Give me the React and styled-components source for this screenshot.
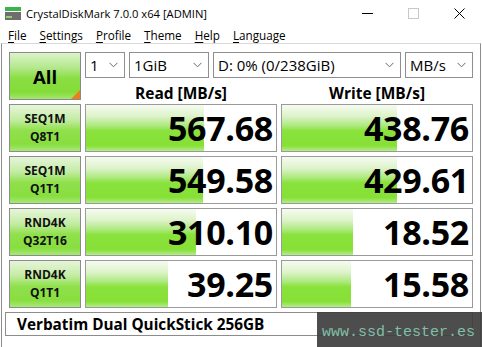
import React from "react";
import styled, { createGlobalStyle } from "styled-components";

const Global = createGlobalStyle`
  html, body { margin: 0; padding: 0; background: #fff; }
  body { font-family: "Open Sans", "Noto Sans", sans-serif; color: #000; }
`;

const Window = styled.div`
  position: relative;
  width: 482px;
  height: 347px;
  overflow: hidden;
  background: #fff;
  display: flex;
  flex-direction: column;
`;

const TitleBar = styled.div`
  height: 27px;
  display: flex;
  align-items: center;
  padding-left: 5px;
  font-size: 11.2px;
  color: #000;
`;

const TitleText = styled.span`
  margin-left: 5px;
  flex: 1;
  white-space: nowrap;
`;

const Ctrl = styled.div`
  width: 46px;
  height: 27px;
  display: flex;
  align-items: center;
  justify-content: center;
`;

const MenuBar = styled.div`
  height: 18px;
  display: flex;
  align-items: center;
  padding-left: 8px;
  font-size: 11.7px;
`;

const MenuItem = styled.span`
  margin-right: ${(p) => p.$mr}px;
  white-space: nowrap;
  & u { text-decoration: underline; text-underline-offset: 2px; }
`;

const Client = styled.div`
  flex: 1;
  margin-left: 1px;
  width: 480px;
  box-sizing: border-box;
  border: 1px solid #8d8d8d;
  border-top-color: #d8d8d8;
  padding: 8px 0 0 7px;
  display: grid;
  grid-template-columns: 72px 192px 192px;
  grid-auto-rows: 48px;
  column-gap: 4px;
  row-gap: 4px;
  align-content: start;
`;

const AllButton = styled.div`
  position: relative;
  box-sizing: border-box;
  border: 1px solid #8a8a8a;
  background: linear-gradient(#dcf3c8 0%, #b6e992 30%, #8ade42 55%, #84dc38 85%, #a6e674 100%);
  display: flex;
  align-items: center;
  justify-content: center;
  font-weight: 700;
  font-size: 18.5px;
  &::after {
    content: "";
    position: absolute;
    right: 0;
    bottom: 0;
    width: 0;
    height: 0;
    border-left: 9px solid transparent;
    border-bottom: 9px solid #e8801e;
  }
`;

const TopRight = styled.div`
  grid-column: 2 / 4;
  display: flex;
  flex-direction: column;
`;

const Combos = styled.div`
  display: flex;
  gap: 4px;
  height: 26px;
`;

const Combo = styled.div`
  width: ${(p) => p.$w}px;
  box-sizing: border-box;
  border: 1px solid #8f8f8f;
  background: #fff;
  display: flex;
  align-items: center;
  padding: 0 6px 0 4px;
  font-size: 15px;
  white-space: nowrap;
  & span { flex: 1; }
`;

const Headers = styled.div`
  flex: 1;
  display: grid;
  grid-template-columns: 192px 192px;
  column-gap: 4px;
  align-items: end;
`;

const Header = styled.div`
  text-align: center;
  font-weight: 700;
  font-size: 15.5px;
  line-height: 16px;
  margin-bottom: -1px;
`;

const Label = styled.div`
  box-sizing: border-box;
  border: 1px solid #8c8c8c;
  background: linear-gradient(#e6f5da 0%, #c4eca4 32%, #90e04c 55%, #88de3e 85%, #a8e87a 100%);
  display: flex;
  flex-direction: column;
  align-items: center;
  justify-content: center;
  font-weight: 700;
  font-size: 12px;
  line-height: 18px;
  color: #111;
`;

const Value = styled.div`
  box-sizing: border-box;
  border: 1px solid #9a9a9a;
  background-color: #fff;
  background-image: linear-gradient(#f6fbf2 0%, #dcf3c8 25%, #ade97e 45%, #8ae23c 56%, #86e036 88%, #b4ec8c 100%);
  background-repeat: no-repeat;
  display: flex;
  align-items: center;
  justify-content: flex-end;
  padding-right: 3px;
  font-weight: 700;
  font-size: 34px;
  letter-spacing: -0.3px;
  line-height: 1;
`;

const Comment = styled.div`
  grid-column: 1 / 4;
  margin-left: -4px;
  height: 24px;
  box-sizing: border-box;
  border: 1px solid #8c8c8c;
  background: #fff;
  display: flex;
  align-items: center;
  padding-left: 11px;
  font-weight: 700;
  font-size: 15.3px;
`;

const Watermark = styled.div`
  position: absolute;
  left: 317px;
  top: 312px;
  right: 0;
  bottom: 0;
  background: rgba(62, 62, 62, 0.92);
  display: flex;
  align-items: center;
  padding-left: 5px;
  padding-top: 6px;
  font-family: "Liberation Mono", "DejaVu Sans Mono", monospace;
  font-size: 15px;
  color: #80bfa8;
  box-sizing: border-box;
`;

const Chevron = () => (
  <svg width="9" height="6" viewBox="0 0 9 6">
    <path d="M0.5 0.8 L4.5 4.8 L8.5 0.8" fill="none" stroke="#666" strokeWidth="1" />
  </svg>
);

const AppIcon = () => (
  <svg width="16" height="14" viewBox="0 0 16 14">
    <rect x="0" y="0" width="16" height="4" fill="#3cb34a" />
    <rect x="0" y="5" width="16" height="8" fill="#6e6e6e" />
    <rect x="1" y="9" width="6" height="2" fill="#8fd36a" />
  </svg>
);

const rows = [
  { a: "SEQ1M", b: "Q8T1", r: "567.68", rw: 118, w: "438.76", ww: 115 },
  { a: "SEQ1M", b: "Q1T1", r: "549.58", rw: 117, w: "429.61", ww: 115 },
  { a: "RND4K", b: "Q32T16", r: "310.10", rw: 110, w: "18.52", ww: 71 },
  { a: "RND4K", b: "Q1T1", r: "39.25", rw: 82, w: "15.58", ww: 69 },
];

export default function App() {
  return (
    <Window>
      <Global />
      <TitleBar>
        <AppIcon />
        <TitleText>CrystalDiskMark 7.0.0 x64 [ADMIN]</TitleText>
        <Ctrl>
          <svg width="11" height="2" viewBox="0 0 11 2"><rect width="11" height="1" fill="#000" /></svg>
        </Ctrl>
        <Ctrl>
          <svg width="11" height="11" viewBox="0 0 11 11"><rect x="0.5" y="0.5" width="10" height="10" fill="none" stroke="#c8c8c8" /></svg>
        </Ctrl>
        <Ctrl>
          <svg width="11" height="11" viewBox="0 0 11 11"><path d="M0.5 0.5 L10.5 10.5 M10.5 0.5 L0.5 10.5" stroke="#000" strokeWidth="1" /></svg>
        </Ctrl>
      </TitleBar>
      <MenuBar>
        <MenuItem $mr={13}><u>F</u>ile</MenuItem>
        <MenuItem $mr={13}><u>S</u>ettings</MenuItem>
        <MenuItem $mr={13}><u>P</u>rofile</MenuItem>
        <MenuItem $mr={13}><u>T</u>heme</MenuItem>
        <MenuItem $mr={13}><u>H</u>elp</MenuItem>
        <MenuItem $mr={0}><u>L</u>anguage</MenuItem>
      </MenuBar>
      <Client>
        <AllButton>All</AllButton>
        <TopRight>
          <Combos>
            <Combo $w={40}><span>1</span><Chevron /></Combo>
            <Combo $w={80}><span>1GiB</span><Chevron /></Combo>
            <Combo $w={188}><span>D: 0% (0/238GiB)</span><Chevron /></Combo>
            <Combo $w={68}><span>MB/s</span><Chevron /></Combo>
          </Combos>
          <Headers>
            <Header>Read [MB/s]</Header>
            <Header>Write [MB/s]</Header>
          </Headers>
        </TopRight>
        {rows.map((row, i) => (
          <React.Fragment key={i}>
            <Label>
              <div>{row.a}</div>
              <div>{row.b}</div>
            </Label>
            <Value style={{ backgroundSize: `${row.rw}px 100%` }}>{row.r}</Value>
            <Value style={{ backgroundSize: `${row.ww}px 100%` }}>{row.w}</Value>
          </React.Fragment>
        ))}
        <Comment>Verbatim Dual QuickStick 256GB</Comment>
      </Client>
      <Watermark>www.ssd-tester.es</Watermark>
    </Window>
  );
}
